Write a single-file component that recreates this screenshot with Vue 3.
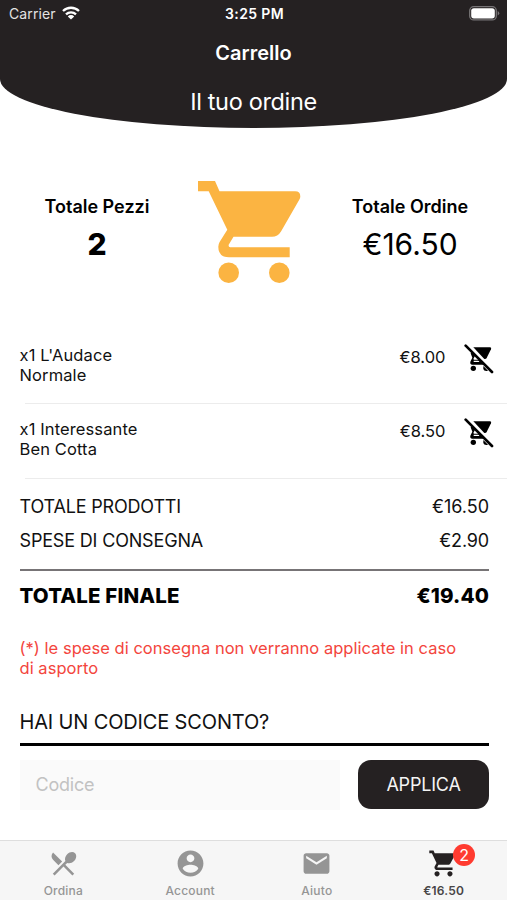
<script setup>
const items = [
  { name: "x1 L'Audace", variant: 'Normale', price: '€8.00' },
  { name: 'x1 Interessante', variant: 'Ben Cotta', price: '€8.50' },
]
const cart = 'M7 18c-1.1 0-1.99.9-1.99 2S5.9 22 7 22s2-.9 2-2-.9-2-2-2zM1 2v2h2l3.6 7.59-1.35 2.45c-.16.28-.25.61-.25.96 0 1.1.9 2 2 2h12v-2H7.42c-.14 0-.25-.11-.25-.25l.03-.12.9-1.63h7.45c.75 0 1.41-.41 1.75-1.03l3.58-6.49c.08-.14.12-.31.12-.48 0-.55-.45-1-1-1H5.21l-.94-2H1zm16 16c-1.1 0-1.99.9-1.99 2s.89 2 1.99 2 2-.9 2-2-.9-2-2-2z'
const tabs = [
  { key: 'ordina', label: 'Ordina', path: 'M8.1 13.34l2.83-2.83L3.91 3.5c-1.56 1.56-1.56 4.09 0 5.66l4.19 4.18zm6.78-1.81c1.53.71 3.68.21 5.27-1.38 1.91-1.91 2.28-4.65.81-6.12-1.46-1.46-4.2-1.1-6.12.81-1.59 1.59-2.09 3.74-1.38 5.27L3.7 19.87l1.41 1.41L12 14.41l6.88 6.88 1.41-1.41L13.41 13l1.47-1.47z' },
  { key: 'account', label: 'Account', path: 'M12 2C6.48 2 2 6.48 2 12s4.48 10 10 10 10-4.48 10-10S17.52 2 12 2zm0 3c1.66 0 3 1.34 3 3s-1.34 3-3 3-3-1.34-3-3 1.34-3 3-3zm0 14.2c-2.5 0-4.71-1.28-6-3.22.03-1.99 4-3.08 6-3.08 1.99 0 5.97 1.09 6 3.08-1.29 1.94-3.5 3.22-6 3.22z' },
  { key: 'aiuto', label: 'Aiuto', path: 'M20 4H4c-1.1 0-1.99.9-1.99 2L2 18c0 1.1.9 2 2 2h16c1.1 0 2-.9 2-2V6c0-1.1-.9-2-2-2zm0 4l-8 5-8-5V6l8 5 8-5v2z' },
  { key: 'cart', label: '€16.50', path: cart, badge: 2 },
]
</script>

<template>
  <div class="screen">
    <header class="header">
      <div class="status">
        <div class="carrier">
          <span>Carrier</span>
          <svg class="wifi" viewBox="0 0 18 14">
            <path d="M1 5a11.500 11.500 0 0 1 16 0M4 8.300a7.200 7.200 0 0 1 10 0" fill="none" stroke="#fff" stroke-width="2.300" />
            <path d="M9 13.600L5.800 10.400a4.600 4.600 0 0 1 6.400 0z" fill="#fff" />
          </svg>
        </div>
        <div class="clock">3:25 PM</div>
        <div class="power">
          <svg class="battery" viewBox="0 0 31 15">
            <rect x=".7" y=".7" width="26.600" height="13.200" rx="4" fill="none" stroke="#777476" stroke-width="1.300" />
            <rect x="2.200" y="2.200" width="23.600" height="10.200" rx="2.600" fill="#fff" />
            <path d="M28.700 5v4.600q1.600-.8 1.600-2.300T28.700 5z" fill="#777476" />
          </svg>
        </div>
      </div>
      <h1 class="title">Carrello</h1>
      <h2 class="subtitle">Il tuo ordine</h2>
    </header>

    <section class="summary">
      <div class="stat">
        <div class="stat-label">Totale Pezzi</div>
        <div class="stat-value bold">2</div>
      </div>
      <svg class="big-cart" viewBox="0 0 103 103">
        <path fill="#fbb442" d="M0 0H17L21.500 10.300H97.200Q102.300 10.300 102.300 15.400Q102.300 17 101.400 18.500L83 50.400Q79.800 55.700 74 55.700H35.500L30.700 63.700Q30.200 66.200 32.200 66.200H91.700V76.200H31Q20.300 76.200 20.300 65.800Q20.300 63.300 21.600 61L29.300 48.800L10.700 10.300H0Z" />
        <circle cx="30.700" cy="91.800" r="10.300" fill="#fbb442" />
        <circle cx="81.300" cy="91.800" r="10.300" fill="#fbb442" />
      </svg>
      <div class="stat">
        <div class="stat-label">Totale Ordine</div>
        <div class="stat-value">€16.50</div>
      </div>
    </section>

    <ul class="items">
      <li v-for="item in items" :key="item.name" class="item">
        <div class="item-name">{{ item.name }}<br />{{ item.variant }}</div>
        <div class="item-price">{{ item.price }}</div>
        <svg class="remove" viewBox="18 15 90 90">
          <path d="M46 25H97Q101 26 99 31L86 57Q84 61 79 60Z" />
          <path d="M40 40L52 49L46 60L48 62H63L78 77H42Q34 75 38 66L43 56L38 43Z" />
          <path d="M47 65.500V69H65L61.500 65.500Z" fill="#fff" />
          <circle cx="46" cy="88" r="8" />
          <path d="M76 81L90 95.500Q78 98 76 90Z" />
          <path d="M84 80Q92 81 92.500 90L82 81Z" />
          <path d="M23 20L102 99" fill="none" stroke="#000" stroke-width="8" stroke-linecap="round" />
        </svg>
      </li>
    </ul>

    <section class="totals">
      <div class="row"><span class="tight">TOTALE PRODOTTI</span><span>€16.50</span></div>
      <div class="row"><span class="tight">SPESE DI CONSEGNA</span><span class="tight">€2.90</span></div>
      <div class="row final"><span>TOTALE FINALE</span><span>€19.40</span></div>
      <p class="note">(*) le spese di consegna non verranno applicate in caso<br />di asporto</p>
      <h3 class="promo-title">HAI UN CODICE SCONTO?</h3>
      <div class="promo">
        <input class="code" type="text" placeholder="Codice" />
        <button class="apply">APPLICA</button>
      </div>
    </section>

    <nav class="tabs">
      <div v-for="tab in tabs" :key="tab.key" class="tab" :class="tab.key">
        <div class="tab-icon">
          <svg viewBox="0 0 24 24"><path :d="tab.path" /></svg>
          <span v-if="tab.badge" class="badge">{{ tab.badge }}</span>
        </div>
        <span class="tab-label">{{ tab.label }}</span>
      </div>
    </nav>
  </div>
</template>

<style>
body { margin: 0; background: #fff; }
</style>

<style scoped>
* { box-sizing: border-box; margin: 0; padding: 0; }
.screen { display: flex; flex-direction: column; width: 507px; height: 900px; overflow: hidden; background: #fff; color: #111; font-family: Inter, "Liberation Sans", sans-serif; }
svg { display: block; }
.header { height: 127.5px; flex: none; background: #252122; color: #fff; border-radius: 0 0 50% 50% / 0 0 49px 49px; text-align: center; }
.status { display: grid; grid-template-columns: 1fr auto 1fr; align-items: center; height: 28px; padding: 0 7px 0 9px; font-size: 14px; line-height: 28px; }
.carrier { display: flex; align-items: center; gap: 6px; color: #e4e3e3; }
.carrier span { letter-spacing: .1px; }
.wifi { width: 18px; height: 14px; margin-top: -2px; }
.clock { font-weight: 600; font-size: 14px; letter-spacing: .35px; }
.power { display: flex; justify-content: flex-end; }
.battery { width: 31px; height: 15px; margin-top: -1px; }
.title { margin-top: 13px; font-size: 20px; line-height: 24px; font-weight: 600; }
.subtitle { margin-top: 22px; font-size: 23.5px; line-height: 30px; font-weight: 400; letter-spacing: -.35px; }
.summary { display: grid; grid-template-columns: 158px 103px 174px; column-gap: 22px; height: 207px; padding: 53.5px 0 0 18px; flex: none; color: #000; }
.stat { display: flex; flex-direction: column; align-items: center; padding-top: 15px; }
.stat-label { font-size: 18px; line-height: 22px; font-weight: 600; white-space: nowrap; }
.stat-value { margin-top: 8px; font-size: 30px; line-height: 36px; }
.bold { font-weight: 800; }
.big-cart { width: 103px; height: 103px; }
.items { list-style: none; flex: none; }
.item { display: flex; align-items: flex-start; height: 74.500px; padding: 10px 13px 0 19.500px; background: linear-gradient(#ececec, #ececec) 25px 68.500px / 482px 1px no-repeat; font-size: 16.500px; line-height: 20.200px; }
.item-name { flex: 1; letter-spacing: .12px; }
.item-price { margin-top: 2px; }
.remove { width: 30px; height: 30px; margin: -1px 0 0 18.500px; fill: #000; }
.totals { display: flex; flex-direction: column; padding: 6px 18px 0 19.500px; }
.row { display: flex; justify-content: space-between; height: 34px; font-size: 18px; line-height: 33.500px; }
.tight { letter-spacing: -.17px; }
.final { height: 50px; margin-top: 11px; border-top: 2px solid #777476; font-size: 20.500px; line-height: 49px; font-weight: 800; letter-spacing: .15px; color: #000; }
.note { margin-top: 19px; font-size: 16.500px; line-height: 20px; letter-spacing: .035px; color: #f3453d; white-space: nowrap; }
.promo-title { height: 68px; padding-top: 32.500px; border-bottom: 3px solid #000; font-size: 20px; line-height: 24px; font-weight: 400; letter-spacing: -.15px; }
.promo { display: flex; justify-content: space-between; margin-top: 14px; }
.code { width: 320px; height: 50px; padding: 0 16px; border: 0; background: #fafafa; font: 18px Inter, sans-serif; letter-spacing: -.2px; }
.code::placeholder { color: #c2c2c2; opacity: 1; }
.apply { width: 131px; height: 49px; border: 0; border-radius: 13px; background: #252122; color: #f4f4f4; font: 18px Inter, sans-serif; letter-spacing: -.2px; }
.tabs { display: grid; grid-template-columns: repeat(4, 1fr); height: 60px; margin-top: auto; border-top: 1px solid #dedede; background: #f6f6f6; flex: none; }
.tab { display: flex; flex-direction: column; align-items: center; color: #959595; }
.tab-icon { position: relative; margin-top: 7px; }
.tab-icon svg { width: 31px; height: 31px; fill: currentColor; }
.tab-label { margin-top: 4px; font-size: 12px; line-height: 16px; font-weight: 500; letter-spacing: .2px; }
.tab.cart { color: #252122; }
.tab.cart .tab-label { font-weight: 600; color: #484546; }
.badge { position: absolute; left: 25px; top: -4px; width: 22px; height: 22px; border-radius: 50%; background: #ff3b30; color: #fff; font-size: 16px; line-height: 22px; text-align: center; }
</style>
